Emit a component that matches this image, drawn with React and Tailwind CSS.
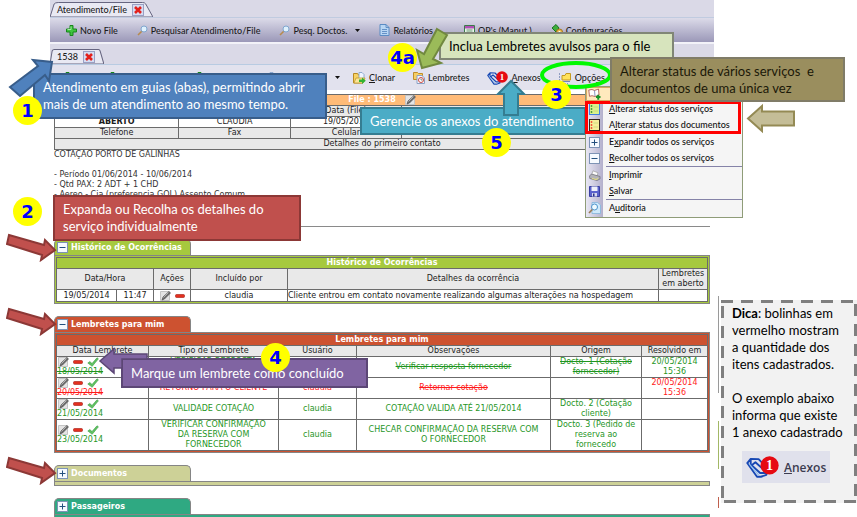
import { useState } from 'react';

const PlusIcon = () => (
  <svg className="h-[11px] w-[11px] shrink-0" viewBox="0 0 11 11">
    <path d="M4 .5h3V4h3.5v3H7v3.5H4V7H.5V4H4z" fill="#3fc43f" stroke="#17861b" />
    <path d="M5 1.500v3H1.500" fill="none" stroke="#a4eea0" />
  </svg>
);

const SearchIcon = () => (
  <svg className="h-[11px] w-[11px] shrink-0" viewBox="0 0 11 11">
    <path d="M5 6 1 10" stroke="#b78a4d" strokeWidth="1.600" />
    <circle cx="7" cy="4" r="3" fill="#dff1fd" stroke="#7fa6cf" />
  </svg>
);

const ReportIcon = () => (
  <svg className="h-3 w-[11px] shrink-0" viewBox="0 0 11 12">
    <path d="M1 .5h6L10 3.500v8H1z" fill="#b9d6f3" stroke="#5b8cc4" />
    <path d="M7 .5v3h3M3 5.500h5M3 7.500h5M3 9.500h5" fill="none" stroke="#4f80bb" strokeWidth=".8" />
  </svg>
);

const OrderIcon = () => (
  <svg className="h-[11px] w-[11px] shrink-0" viewBox="0 0 11 11">
    <path d="M.5.5h10v10H.5z" fill="#e8f4e8" stroke="#3a7a4a" />
    <path d="M1 1h9v2.500H1z" fill="#b04fb4" />
    <path d="M2.500 5h6M2.500 7h6" stroke="#6b9a74" />
  </svg>
);

const GearIcon = () => (
  <svg className="h-3 w-3 shrink-0" viewBox="0 0 12 12">
    <path d="M1 4 5 .5 8 4 5 8z" fill="#3fae3d" stroke="#1b7421" />
    <circle cx="8.500" cy="8" r="3" fill="#e9b949" stroke="#a4761d" />
    <circle cx="8.500" cy="8" r="1" fill="#fff" />
  </svg>
);

const CloneIcon = () => (
  <svg className="h-3 w-[13px] shrink-0" viewBox="0 0 13 12">
    <path d="M.5 11V1.500h4l1 1.500h4v8z" fill="#f7d266" stroke="#b98a22" />
    <path d="M6 .5h3l2 2v4H6z" fill="#eef5ff" stroke="#7a9cc8" strokeWidth=".8" />
    <path d="m1 11 2-5h9l-2 5z" fill="#fbe698" stroke="#c39a33" strokeWidth=".8" />
    <path d="M6 7.500h3V5.500l3.800 3.300L9 12v-2H6z" fill="#32b332" />
  </svg>
);

const ReminderIcon = () => (
  <svg className="h-[13px] w-3 shrink-0" viewBox="0 0 12 13">
    <path d="M.5 1.500h4l1 1h4v6h-9z" fill="#f7cf63" stroke="#bf8e2b" />
    <path d="M4 4.500h5l2.500 2.500v5.500H4z" fill="#f2f6ff" stroke="#8aa0c4" />
    <circle cx="8" cy="9" r="2.500" fill="#fff" stroke="#cf4b3f" />
    <path d="M8 7.500V9h1.500" fill="none" stroke="#555" strokeWidth=".7" />
  </svg>
);

const ClipIcon = ({ className = 'h-[14px] w-[21px]' }) => (
  <svg className={`${className} shrink-0`} viewBox="0 0 21 14">
    <path
      d="M.8 4.500 3 1.800l5 .2 5 5v5l-3.500 1.200H7zM3 1.800v3.500l6 5.500h3.500M4 5.500l2-1.500 5 4.500"
      fill="none"
      stroke="#1748b4"
      strokeWidth="1.200"
      strokeLinejoin="round"
    />
    <path d="m2 5 6 7" stroke="#8fc0ee" strokeWidth=".8" />
    <circle cx="15" cy="6" r="5.800" fill="#e60a12" />
    <text x="15" y="9" textAnchor="middle" fontFamily="Liberation Serif, serif" fontWeight="bold" fontSize="9" fill="#fff">
      1
    </text>
  </svg>
);

const OptionsIcon = () => (
  <svg className="h-3 w-[13px] shrink-0" viewBox="0 0 13 12">
    <path d="M.5 1v10.500H9" fill="none" stroke="#8f9dc0" strokeDasharray="2 1" />
    <path d="M3 3.500h3l1-2h4.500v6.500H3z" fill="#ffe25c" stroke="#c59a20" />
    <path d="M3 9.500h8" stroke="#6f88bb" />
  </svg>
);

const PencilIcon = () => (
  <svg className="inline-block h-[10px] w-[11px] shrink-0" viewBox="0 0 11 10">
    <path d="M.5.5h9v9h-9z" fill="#e4e4e4" stroke="#c5c5c5" />
    <path d="m2 9 1-3 6-5.500 1.500 1.500-6 6z" fill="#6d6d6d" stroke="#4a4a4a" strokeWidth=".6" />
    <path d="m3.500 6.500 5-5" stroke="#c8c8c8" strokeWidth=".8" />
  </svg>
);

const MinusIcon = () => (
  <svg className="h-[10px] w-[10px] shrink-0" viewBox="0 0 10 10">
    <rect x=".5" y="3.500" width="9" height="3" rx="1" fill="#e3301f" stroke="#a31a10" strokeWidth=".6" />
  </svg>
);

const CheckIcon = () => (
  <svg className="h-[10px] w-3 shrink-0" viewBox="0 0 12 10">
    <path d="m.8 6 2-1.500L5 6.500 10 .8l1.400 1L5.200 9.300z" fill="#5fc361" stroke="#3c9a44" strokeWidth=".6" />
  </svg>
);

const BookIcon = () => (
  <svg className="h-[13px] w-[13px]" viewBox="0 0 13 13">
    <path d="M.8 2 4 1.500l2.500 1 4-1.500.5 6-4 1.500-3-.8-2.500.6z" fill="#fff" stroke="#a34a4a" strokeWidth=".8" />
    <path d="M6.500 2.500 7 8" stroke="#6e7fb2" strokeWidth=".8" />
    <path d="M8 9h4.500M10.250 6.800v5" stroke="#16952a" strokeWidth="2" />
  </svg>
);

const ListIcon = ({ dark }) => (
  <svg className="h-3 w-[11px]" viewBox="0 0 11 12">
    <rect x=".5" y=".5" width="10" height="11" fill={dark ? '#f6ef9a' : '#d9f28c'} stroke={dark ? '#33261d' : '#3f7fe0'} />
    <path d="M2.500 2v8.500" stroke={dark ? '#f25a3d' : '#4f9f3f'} strokeWidth="1.500" strokeDasharray="2 1" />
    <path d="M4.500 4H9M4.500 8H9" stroke="#b9cf6b" strokeWidth=".6" />
  </svg>
);

const PrinterIcon = () => (
  <svg className="h-[11px] w-3" viewBox="0 0 12 11">
    <path d="M2.500 5 4 .8l5 2L8 6z" fill="#fafafa" stroke="#9b9b9b" strokeWidth=".7" />
    <path d="m.5 6 2-2 8.500 2.500v2.500l-3 1.500L.8 8.500z" fill="#b4b4b8" stroke="#6a6a72" strokeWidth=".7" />
    <path d="m3 8.500 4 1 2-1" fill="none" stroke="#e9e27b" />
  </svg>
);

const DiskIcon = () => (
  <svg className="h-[11px] w-[11px]" viewBox="0 0 11 11">
    <path d="M.5.5h10v10h-10z" fill="#5a62cc" stroke="#3a40a0" />
    <path d="M2.500.5h6v4.500h-6z" fill="#eef0fb" />
    <path d="M3 7h5v3.500H3z" fill="#d5d8ef" />
    <path d="M4 7.500h1.500v3H4z" fill="#2b3188" />
  </svg>
);

const AuditIcon = () => (
  <svg className="h-3 w-[13px]" viewBox="0 0 13 12">
    <path d="M4 .5h5.500l3 2.500v8.500H4z" fill="#cfe9fb" stroke="#83b5dc" strokeWidth=".8" />
    <circle cx="6.500" cy="5" r="3" fill="#eefaff" stroke="#4c93cc" />
    <path d="M4.300 7.500 1 11" stroke="#9a7b55" strokeWidth="1.600" />
  </svg>
);

const BoxIcon = ({ plus }) => (
  <svg className="h-[11px] w-[11px] shrink-0" viewBox="0 0 11 11">
    <rect x=".5" y=".5" width="10" height="10" fill="#f6faff" stroke="#7d93b5" />
    <path d={plus ? 'M2.500 5.500h6M5.500 2.500v6' : 'M2.500 5.500h6'} stroke="#24507e" />
  </svg>
);

const Caret = () => (
  <svg className="h-[3px] w-[5px] shrink-0" viewBox="0 0 5 3">
    <path d="M0 0h5L2.500 3z" fill="#111" />
  </svg>
);

// Slanted document tab with its close button
function DocTab({ label }) {
  return (
    <div className="relative flex h-[15px] w-fit items-center gap-[5px] pl-[7px] pr-[9px]">
      <svg className="absolute inset-0 h-full w-full" viewBox="0 0 100 15" preserveAspectRatio="none">
        <path d="M0 15 4 2Q5 .5 8 .5H90Q92 .5 93 2l7 13z" fill="#e9e9f3" stroke="#666580" vectorEffect="non-scaling-stroke" />
      </svg>
      <button type="button" className="relative">{label}</button>
      <button
        type="button"
        aria-label="Fechar"
        className="relative flex h-3 w-3 items-center justify-center border border-[#9aa0c4] bg-[#d5dcf2]"
      >
        <svg className="h-2 w-2" viewBox="0 0 8 8">
          <path d="m1 1 6 6M7 1 1 7" stroke="#e3201b" strokeWidth="2.600" />
        </svg>
      </button>
    </div>
  );
}

function ToolButton({ icon, children, className = '', ...rest }) {
  return (
    <button type="button" className={`flex items-center gap-[3px] whitespace-nowrap ${className}`} {...rest}>
      {icon}
      {children && <span>{children}</span>}
    </button>
  );
}

// Collapsible section: coloured tab over a coloured frame
function Section({ title, color, open, children }) {
  const [expanded, setExpanded] = useState(open);
  return (
    <section className="mb-3">
      <button
        type="button"
        onClick={() => setExpanded(!expanded)}
        className={`flex h-4 w-[137px] items-center gap-[3px] whitespace-nowrap rounded-t-[5px] border border-b-0 border-[#858585] pl-[2px] font-bold text-white ${color}`}
      >
        <BoxIcon plus={!expanded} />
        {title}
      </button>
      <div className={`border border-[#858585] p-px ${color}`}>
        {expanded ? children : <div className="h-px"></div>}
      </div>
    </section>
  );
}

const cell = 'border border-[#6b6b6b] p-0';

const reminders = [
  {
    date: '18/05/2014',
    type: 'VERIFICAR RESPOSTA\nFORNECEDOR',
    note: 'Verificar resposta fornecedor',
    origin: 'Docto. 1 (Cotação\nfornecedor)',
    solved: '20/05/2014\n15:36',
    tone: 'text-[#1f961f]',
    strike: 'line-through',
  },
  {
    date: '20/05/2014',
    type: 'RETORNO PARA O CLIENTE',
    note: 'Retornar cotação',
    origin: '',
    solved: '20/05/2014\n15:36',
    tone: 'text-[#ff1a1a]',
    strike: 'line-through',
  },
  {
    date: '21/05/2014',
    type: 'VALIDADE COTAÇÃO',
    note: 'COTAÇÃO VALIDA ATÉ 21/05/2014',
    origin: 'Docto. 2 (Cotação\ncliente)',
    solved: '',
    tone: 'text-[#1f961f]',
    strike: '',
  },
  {
    date: '23/05/2014',
    type: 'VERIFICAR CONFIRMAÇÃO\nDA RESERVA COM\nFORNECEDOR',
    note: 'CHECAR CONFIRMAÇÃO DA RESERVA COM\nO FORNECEDOR',
    origin: 'Docto. 3 (Pedido de\nreserva ao\nfornecedo',
    solved: '',
    tone: 'text-[#1f961f]',
    strike: '',
  },
];

function FileTable() {
  return (
    <table className="w-full table-fixed border-collapse text-center">
      <colgroup>
        <col className="w-[19%]" />
        <col className="w-[17%]" />
        <col className="w-[17%]" />
        <col />
      </colgroup>
      <tbody>
        <tr className="bg-[#ffbb78] text-white">
          <th colSpan={4} className={cell}>
            <span className="flex h-[10px] items-center justify-center gap-[9px]">
              File : 1538
              <PencilIcon />
            </span>
          </th>
        </tr>
        <tr className="h-[11px] bg-[#e9e9e9]">
          <td className={cell}></td>
          <td className={cell}></td>
          <td className={cell}>Data (File)</td>
          <td className={cell}></td>
        </tr>
        <tr>
          <td className={`${cell} font-bold`}>ABERTO</td>
          <td className={cell}>CLAUDIA</td>
          <td className={cell}>19/05/2014</td>
          <td className={cell}></td>
        </tr>
        <tr className="bg-[#e9e9e9]">
          <td className={cell}>Telefone</td>
          <td className={cell}>Fax</td>
          <td className={cell}>Celular</td>
          <td className={cell}>Email</td>
        </tr>
        <tr className="bg-[#e9e9e9]">
          <td colSpan={4} className={cell}>Detalhes do primeiro contato</td>
        </tr>
      </tbody>
    </table>
  );
}

function HistoryTable() {
  return (
    <table className="w-full table-fixed border-collapse bg-white text-center">
      <colgroup>
        <col className="w-[60px]" />
        <col className="w-[37px]" />
        <col className="w-[37px]" />
        <col className="w-[97px]" />
        <col />
        <col className="w-[49px]" />
      </colgroup>
      <thead>
        <tr className="bg-[#a6c93e] text-white">
          <th colSpan={6} className={cell}>Histórico de Ocorrências</th>
        </tr>
        <tr className="bg-[#e9e9e9]">
          <th colSpan={2} className={`${cell} font-normal`}>Data/Hora</th>
          <th className={`${cell} font-normal`}>Ações</th>
          <th className={`${cell} font-normal`}>Incluído por</th>
          <th className={`${cell} font-normal`}>Detalhes da ocorrência</th>
          <th className={`${cell} font-normal`}>Lembretes em aberto</th>
        </tr>
      </thead>
      <tbody>
        <tr className="h-3">
          <td className={cell}>19/05/2014</td>
          <td className={cell}>11:47</td>
          <td className={cell}>
            <span className="flex items-center justify-center gap-1">
              <PencilIcon />
              <MinusIcon />
            </span>
          </td>
          <td className={cell}>claudia</td>
          <td className={`${cell} whitespace-nowrap text-left`}>
            Cliente entrou em contato novamente realizando algumas alterações na hospedagem
          </td>
          <td className={cell}></td>
        </tr>
      </tbody>
    </table>
  );
}

function ReminderTable() {
  return (
    <table className="w-full table-fixed border-collapse bg-white text-center">
      <colgroup>
        <col className="w-[92px]" />
        <col className="w-[130px]" />
        <col className="w-[78px]" />
        <col />
        <col className="w-[91px]" />
        <col className="w-[66px]" />
      </colgroup>
      <thead>
        <tr className="bg-[#cd5230] text-white">
          <th colSpan={6} className={cell}>Lembretes para mim</th>
        </tr>
        <tr className="bg-[#e9e9e9]">
          {['Data Lembrete', 'Tipo de Lembrete', 'Usuário', 'Observações', 'Origem', 'Resolvido em'].map((name) => (
            <th key={name} className={`${cell} font-normal`}>{name}</th>
          ))}
        </tr>
      </thead>
      <tbody className="whitespace-pre-line">
        {reminders.map((item) => (
          <tr key={item.date} className={item.tone}>
            <td className={`${cell} text-left`}>
              <span className="flex items-center gap-1 pl-px">
                <PencilIcon />
                <MinusIcon />
                <CheckIcon />
              </span>
              <span className={item.strike}>{item.date}</span>
            </td>
            <td className={`${cell} ${item.strike}`}>{item.type}</td>
            <td className={`${cell} ${item.strike}`}>claudia</td>
            <td className={`${cell} ${item.strike}`}>{item.note}</td>
            <td className={`${cell} ${item.strike}`}>{item.origin}</td>
            <td className={cell}>{item.solved}</td>
          </tr>
        ))}
      </tbody>
    </table>
  );
}

function MenuItem({ icon, children }) {
  return (
    <button type="button" role="menuitem" className="flex h-4 w-full items-center whitespace-nowrap text-left">
      <span className="flex w-[17px] justify-center">{icon}</span>
      <span className="pl-[6px]">{children}</span>
    </button>
  );
}

function OptionsMenu() {
  return (
    <div
      role="menu"
      className="absolute left-[585px] top-[86px] w-[158px] border border-[#8f9c78] bg-[#f5f5f5] bg-[linear-gradient(90deg,#e9e8f4_0,#b3b0cc_17px,#f5f5f5_17px)] pb-px text-[9px] font-medium text-[#111]"
    >
      <div className="flex h-[14px] items-center border border-[#d8a860] bg-[#ffe9bd] pl-px">
        <BookIcon />
      </div>
      <MenuItem icon={<ListIcon />}><u>A</u>lterar status dos serviços</MenuItem>
      <MenuItem icon={<ListIcon dark />}>A<u>l</u>terar status dos documentos</MenuItem>
      <hr className="ml-5 border-transparent" />
      <MenuItem icon={<BoxIcon plus />}>E<u>x</u>pandir todos os serviços</MenuItem>
      <MenuItem icon={<BoxIcon />}><u>R</u>ecolher todos os serviços</MenuItem>
      <hr className="ml-5 border-[#8583a8]" />
      <MenuItem icon={<PrinterIcon />}><u>I</u>mprimir</MenuItem>
      <MenuItem icon={<DiskIcon />}><u>S</u>alvar</MenuItem>
      <hr className="ml-5 border-[#8583a8]" />
      <MenuItem icon={<AuditIcon />}>A<u>u</u>ditoria</MenuItem>
    </div>
  );
}

function Callout({ className, children }) {
  return (
    <div className={`absolute flex items-center whitespace-pre border-2 pl-2 text-[13px] leading-[17px] ${className}`}>
      {children}
    </div>
  );
}

function Step({ className, children }) {
  return (
    <div
      className={`absolute flex h-[29px] w-[29px] items-center justify-center rounded-full bg-[#ffff00] font-['DejaVu_Sans',sans-serif] text-[18px] font-bold leading-none text-[#0000ff] ${className}`}
    >
      {children}
    </div>
  );
}

function RedArrow({ className }) {
  return (
    <svg className={`absolute left-[6px] h-[29px] w-[51px] ${className}`} viewBox="0 0 51 29">
      <path d="M3 2 38 12l1-5 10 10-14 10 1-5L1 11z" fill="#c0504d" stroke="#8c3836" strokeWidth="2" />
    </svg>
  );
}

function Annotations() {
  return (
    <>
      <Callout className="left-[33px] top-[73px] h-[46px] w-[294px] border-[#385d8a] bg-[#4f81bd] text-white">
        {'Atendimento em guias (abas), permitindo abrir\nmais de um atendimento ao mesmo tempo.'}
      </Callout>
      <svg className="absolute left-2 top-[57px] h-[44px] w-[48px]" viewBox="0 0 48 44">
        <path d="M25 3 44 5l-3 19-4-6-25 21L2 30 30 9z" fill="#4f81bd" stroke="#385d8a" strokeWidth="2" />
      </svg>
      <Step className="left-[13px] top-[96px]">1</Step>

      <Callout className="left-[53px] top-[195px] h-[46px] w-[248px] border-[#8c3836] bg-[#c0504d] text-white">
        {'Expanda ou Recolha os detalhes do\nserviço individualmente'}
      </Callout>
      <Step className="left-[13px] top-[197px]">2</Step>
      <RedArrow className="top-[233px]" />
      <RedArrow className="top-[307px]" />
      <RedArrow className="top-[456px]" />

      <Callout className="left-[439px] top-[32px] h-7 w-[235px] border-[#808676] bg-[#d7e4bd] text-black">
        Inclua Lembretes avulsos para o file
      </Callout>
      <Step className="left-[388px] top-[43px]">4a</Step>
      <svg className="absolute left-[414px] top-[26px] h-[44px] w-[36px]" viewBox="0 0 36 44">
        <path d="m23 3 10 6-14 24 8 4-19 5L3 24l7 4z" fill="#9bbb59" stroke="#71893f" strokeWidth="2" />
      </svg>

      <Callout className="left-[360px] top-[107px] h-7 w-[226px] border-[#357d91] bg-[#4bacc6] text-white">
        Gerencie os anexos do atendimento
      </Callout>
      <svg className="absolute left-[496px] top-[79px] h-[38px] w-[30px]" viewBox="0 0 30 38">
        <path d="M15 2 28 15h-6v21H8V15H2z" fill="#4bacc6" stroke="#357d91" strokeWidth="2" />
      </svg>
      <Step className="left-[482px] top-[128px]">5</Step>

      <OptionsMenu />
      <div className="absolute left-[585px] top-[101px] h-[33px] w-[156px] border-3 border-[#ff0000]"></div>
      <svg className="absolute left-[538px] top-[59px] h-[32px] w-[76px]" viewBox="0 0 76 32">
        <ellipse cx="38" cy="16" rx="34" ry="12" fill="none" stroke="#00f800" strokeWidth="4" />
      </svg>
      <Step className="left-[542px] top-[80px]">3</Step>
      <Callout className="left-[610px] top-[57px] h-[45px] w-[235px] border-[#807c68] bg-[#9a8e5e] text-[#1a1808]">
        {'Alterar status de vários serviços  e\ndocumentos de uma única vez'}
      </Callout>
      <svg className="absolute left-[746px] top-[102px] h-[33px] w-[50px]" viewBox="0 0 50 33">
        <path d="M2 16.500 16 4v5.500h32v14H16V29z" fill="#c4bd97" stroke="#948a54" strokeWidth="2" />
      </svg>

      <Callout className="left-[121px] top-[358px] h-[30px] w-[247px] border-[#5c4776] bg-[#8064a2] text-white">
        Marque um lembrete como concluído
      </Callout>
      <svg className="absolute left-[98px] top-[347px] h-[28px] w-[51px]" viewBox="0 0 51 28">
        <path d="M49 7H16V2L2 14l14 12v-5h8V12h25z" fill="#8064a2" stroke="#5c4776" strokeWidth="1.500" />
      </svg>
      <Step className="left-[261px] top-[343px]">4</Step>
    </>
  );
}

function TipPanel() {
  return (
    <aside className="flex w-[143px] shrink-0 gap-[2px] pl-1 pt-[296px]">
      <div className="w-px">
        <div className="h-[97px] bg-[#9a9a9a]"></div>
        <div className="mt-7 h-12 bg-[#a3b866]"></div>
        <div className="mt-7 h-[11px] bg-[#c0604d]"></div>
      </div>
      <div className="relative mt-1 h-fit flex-1 bg-[#f2f2f2] pb-5 pl-[11px] pt-[5px] text-[13px] leading-[17px] text-black">
        <svg className="absolute inset-0 h-full w-full">
          <rect width="100%" height="100%" fill="none" stroke="#7f7f7f" strokeWidth="6" strokeDasharray="12 8" />
        </svg>
        <p className="whitespace-pre">
          <b>Dica</b>
          {': bolinhas em\nvermelho mostram\na quantidade dos\nitens cadastrados.'}
        </p>
        <p className="mt-[17px] whitespace-pre">{'O exemplo abaixo\ninforma que existe\n1 anexo cadastrado'}</p>
        <button
          type="button"
          className="ml-[10px] mt-[10px] flex h-8 items-center gap-[5px] bg-[#e0e1ec] px-1 font-['Open_Sans',sans-serif] text-[12px] font-semibold text-[#3c3c50]"
        >
          <ClipIcon className="h-[22px] w-[33px]" />
          <span><u>A</u>nexos</span>
        </button>
      </div>
    </aside>
  );
}

export default function App() {
  return (
    <div className="relative flex bg-white font-['Lato',sans-serif]">
      <main className="min-w-0 flex-1 pl-[50px] text-[8px] text-[#1c1c1c]">
        <header className="text-[9px] font-medium leading-[11px]">
          <div className="bg-[#dad9e7] pt-[2px]">
            <DocTab label="Atendimento/File" />
          </div>
          <nav className="flex h-[25px] items-center gap-[19px] border-t border-[#c0cbe0] bg-linear-to-b from-[#dcdbe9] to-[#9b98b8] pl-4">
            <ToolButton icon={<PlusIcon />}>Novo File</ToolButton>
            <ToolButton icon={<SearchIcon />}>Pesquisar Atendimento/File</ToolButton>
            <ToolButton icon={<SearchIcon />}>
              <span className="flex items-center gap-2">Pesq. Doctos. <Caret /></span>
            </ToolButton>
            <ToolButton icon={<ReportIcon />}>Relatórios</ToolButton>
            <ToolButton icon={<OrderIcon />} className="ml-3">OP's (Manut.)</ToolButton>
            <ToolButton icon={<GearIcon />}>Configurações</ToolButton>
          </nav>
          <div className="border-t-2 border-[#f2f2f8] bg-[#dad9e7] pt-[5px]">
            <DocTab label="1538" />
          </div>
          <nav className="flex h-[26px] items-center border-t border-[#b8cbe2] bg-[#e2e2ee]">
            <div className="flex w-[303px] items-center pl-3">
              <ToolButton icon={<PlusIcon />} aria-label="Novo" className="w-[45px]" />
              <ToolButton icon={<PlusIcon />} aria-label="Incluir" className="w-[87px]" />
              <ToolButton icon={<PlusIcon />} aria-label="Adicionar" className="w-[70px]" />
              <ToolButton icon={<CloneIcon />} aria-label="Editar" className="w-[71px]" />
              <Caret />
            </div>
            <div className="flex items-center gap-[18px]">
              <ToolButton icon={<CloneIcon />}><u>C</u>lonar</ToolButton>
              <ToolButton icon={<ReminderIcon />}>Lembretes</ToolButton>
              <ToolButton icon={<ClipIcon />}><u>A</u>nexos</ToolButton>
              <ToolButton icon={<OptionsIcon />} aria-haspopup="menu">Opçõ<u>e</u>s</ToolButton>
            </div>
          </nav>
        </header>

        <div className="px-1 pt-1 font-['DejaVu_Sans',sans-serif] leading-[10px]">
          <FileTable />
          <div className="mb-3 h-[77px] overflow-hidden whitespace-pre border-b border-[#8a8a8a] text-[#333]">
            {'COTAÇÃO PORTO DE GALINHAS\n\n- Período 01/06/2014 - 10/06/2014\n- Qtd PAX: 2 ADT + 1 CHD\n- Aereo - Cia (preferencia GOL) Assento Comum'}
          </div>
          <Section title="Histórico de Ocorrências" color="bg-[#a6c93e]" open>
            <HistoryTable />
          </Section>
          <Section title="Lembretes para mim" color="bg-[#cd5230]" open>
            <ReminderTable />
          </Section>
          <Section title="Documentos" color="bg-[#cdd197]" open={false} />
          <Section title="Passageiros" color="bg-[#2fa982]" open={false} />
        </div>
      </main>
      <TipPanel />
      <Annotations />
    </div>
  );
}
